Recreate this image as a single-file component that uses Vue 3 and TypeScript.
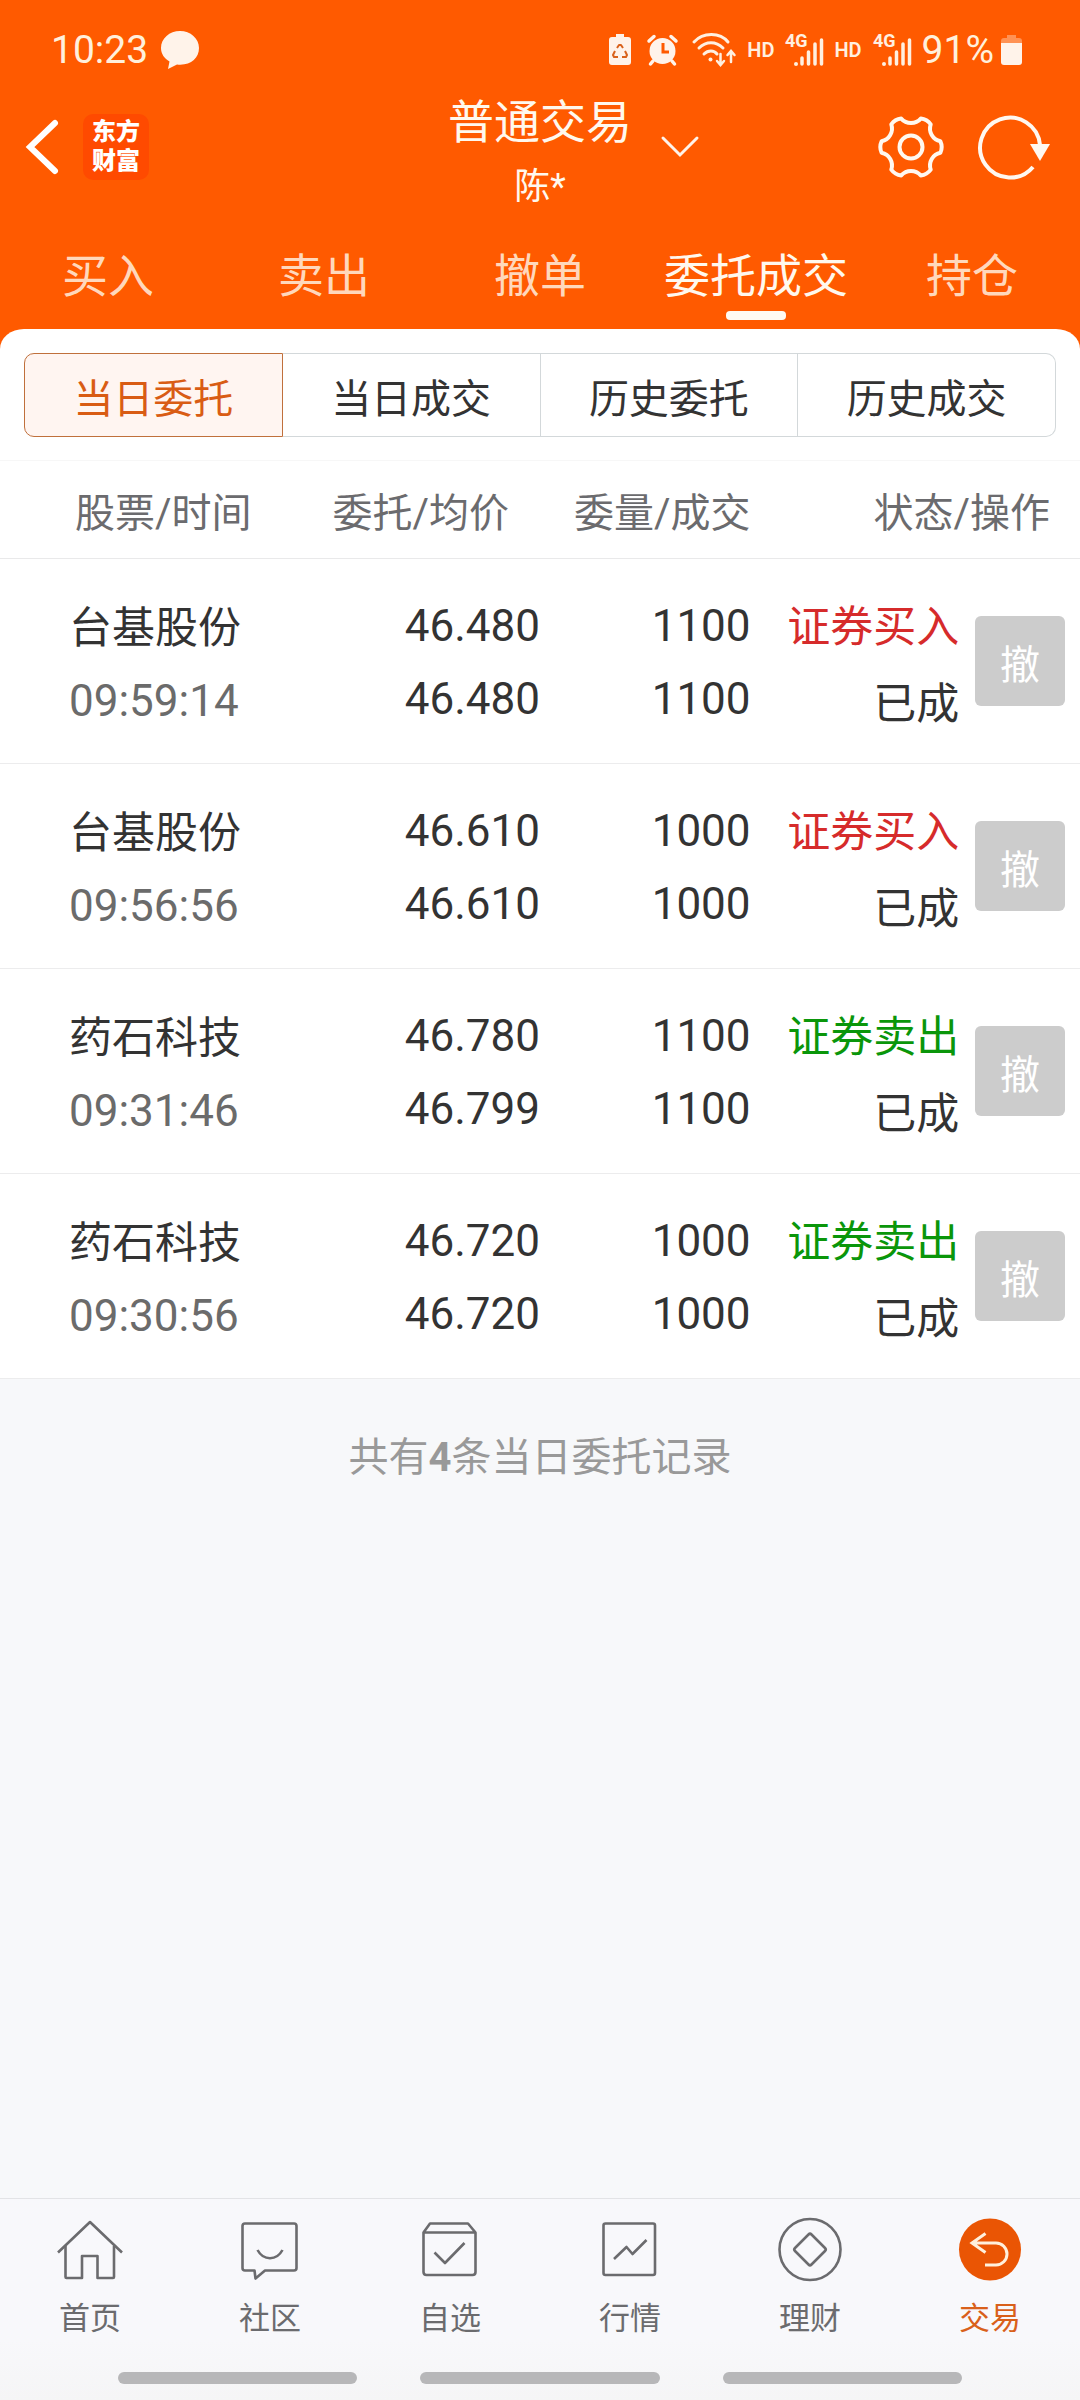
<script setup lang="ts">
interface Order {
  name: string
  time: string
  price: string
  average: string
  volume: string
  filled: string
  side: 'buy' | 'sell'
}

const tabs: string[] = ['买入', '卖出', '撤单', '委托成交', '持仓']
const activeTab = 3

const segments: string[] = ['当日委托', '当日成交', '历史委托', '历史成交']
const activeSegment = 0

const orders: Order[] = [
  { name: '台基股份', time: '09:59:14', price: '46.480', average: '46.480', volume: '1100', filled: '1100', side: 'buy' },
  { name: '台基股份', time: '09:56:56', price: '46.610', average: '46.610', volume: '1000', filled: '1000', side: 'buy' },
  { name: '药石科技', time: '09:31:46', price: '46.780', average: '46.799', volume: '1100', filled: '1100', side: 'sell' },
  { name: '药石科技', time: '09:30:56', price: '46.720', average: '46.720', volume: '1000', filled: '1000', side: 'sell' },
]

const sideLabel = { buy: '证券买入', sell: '证券卖出' }

const navItems: { key: string; label: string }[] = [
  { key: 'home', label: '首页' },
  { key: 'community', label: '社区' },
  { key: 'watchlist', label: '自选' },
  { key: 'market', label: '行情' },
  { key: 'finance', label: '理财' },
  { key: 'trade', label: '交易' },
]
const activeNav = 'trade'

// Six rounded teeth joined by concave arcs
function buildGear(cx: number, cy: number, radius: number): string {
  const point = (degrees: number, r: number): string => {
    const t = (degrees * Math.PI) / 180
    return `${(cx + r * Math.cos(t)).toFixed(1)} ${(cy + r * Math.sin(t)).toFixed(1)}`
  }
  let d = `M${point(-11, radius)}`
  for (let a = 0; a < 360; a += 60) {
    d += `Q${point(a, radius + 2)} ${point(a + 11, radius)}`
    d += `A13 13 0 0 0 ${point(a + 49, radius)}`
  }
  return d + 'Z'
}
const gearPath = buildGear(37, 38, 30)
</script>

<template>
  <div class="app">
    <header class="top">
      <div class="status">
        <div class="status-left">
          <span class="clock">10:23</span>
          <svg width="40" height="40" viewBox="0 0 40 40" aria-hidden="true">
            <path d="M20 1C9.500 1 1 8.500 1 18c0 6 3.500 10.500 8.500 13.500L8 39l9-4.500c13 1.500 22-6 22-16.500C39 8.500 30.500 1 20 1Z" fill="#fff3ea" />
          </svg>
        </div>
        <div class="status-right">
          <svg width="26" height="36" viewBox="0 0 26 36" aria-hidden="true">
            <path d="M9 2h8v3h4a3 3 0 0 1 3 3v22a3 3 0 0 1-3 3H5a3 3 0 0 1-3-3V8a3 3 0 0 1 3-3h4Z" fill="#fff3ea" />
            <g fill="none" stroke="#d9621c" stroke-width="2" stroke-linejoin="round">
              <path d="M10 16l2-3h2l2 3M18 19l2 4-1 2h-4M11 25H7l-1-2 2-4" />
            </g>
          </svg>
          <svg width="38" height="36" viewBox="0 0 38 36" aria-hidden="true">
            <circle cx="19.500" cy="19" r="13" fill="#fff3ea" />
            <path d="M6 9l5-4.500M33 9l-5-4.500M10 29l-2.500 3M29 29l2.500 3" stroke="#fff3ea" stroke-width="3.500" stroke-linecap="round" />
            <path d="M20 11v9h6" fill="none" stroke="#ff5a00" stroke-width="3" />
          </svg>
          <svg width="46" height="36" viewBox="0 0 46 36" aria-hidden="true">
            <g fill="none" stroke="#fff0e0" stroke-width="3" stroke-linecap="round">
              <path d="M3 10C12 0 29 0 37 10" />
              <path d="M8 16c7-7 17-7 24 0" />
              <path d="M13 22c4-4 10-4 13 0" />
              <path d="M29.500 22v10M26 29l3.500 4 3.500-4M40 30V20M36.500 23l3.500-4 3.500 4" stroke-width="2.500" />
            </g>
            <circle cx="19.500" cy="27.500" r="2" fill="#fff0e0" />
          </svg>
          <span class="hd">HD</span>
          <svg width="40" height="44" viewBox="0 -4 40 44" aria-hidden="true">
            <text class="net" x="1" y="15">4G</text>
            <path d="M18 26v6M24.500 20v12M31 12v20M37.500 8v24" stroke="#fff0e0" stroke-width="3.500" stroke-linecap="round" />
            <circle cx="12" cy="32" r="2" fill="#fff0e0" />
          </svg>
          <span class="hd">HD</span>
          <svg width="40" height="44" viewBox="0 -4 40 44" aria-hidden="true">
            <text class="net" x="1" y="15">4G</text>
            <path d="M18 26v6M24.500 20v12M31 12v20M37.500 8v24" stroke="#fff0e0" stroke-width="3.500" stroke-linecap="round" />
            <circle cx="12" cy="32" r="2" fill="#fff0e0" />
          </svg>
          <span class="battery">
            <span class="clock">91%</span>
            <svg width="21" height="36" viewBox="0 0 21 36" aria-hidden="true">
              <path d="M6 3h9v3h3a3 3 0 0 1 3 3v4H0V9a3 3 0 0 1 3-3h3Z" fill="#ff9254" />
              <path d="M0 11h21v19a3 3 0 0 1-3 3H3a3 3 0 0 1-3-3Z" fill="#fff3ea" />
            </svg>
          </span>
        </div>
      </div>

      <div class="bar">
        <div class="bar-left">
          <button type="button" class="plain" aria-label="返回">
            <svg width="40" height="62" viewBox="0 0 40 62">
              <path d="M33 7 8 31l25 24" fill="none" stroke="#fff" stroke-width="6" stroke-linecap="round" />
            </svg>
          </button>
          <span class="logo">东方<br />财富</span>
        </div>
        <div class="account">
          <h1>普通交易</h1>
          <p>陈*</p>
        </div>
        <div class="bar-right">
          <button type="button" class="plain" aria-label="切换账户">
            <svg width="40" height="24" viewBox="0 0 40 24">
              <path d="M3 3 20 20 37 3" fill="none" stroke="#fff3ea" stroke-width="3" stroke-linecap="round" />
            </svg>
          </button>
          <div class="tools">
            <button type="button" class="plain" aria-label="设置">
              <svg width="74" height="76" viewBox="0 0 74 76">
                <g fill="none" stroke="#fff8f0" stroke-width="4" stroke-linejoin="round">
                  <path :d="gearPath" />
                  <circle cx="37" cy="38" r="11.500" />
                </g>
              </svg>
            </button>
            <button type="button" class="plain" aria-label="刷新">
              <svg width="76" height="76" viewBox="0 0 76 76">
                <path d="M57 58A30 30 0 1 1 64 36" fill="none" stroke="#fff8f0" stroke-width="4" />
                <path d="M54 35h20L64 52Z" fill="#fff8f0" />
              </svg>
            </button>
          </div>
        </div>
      </div>

      <nav class="tabs">
        <button
          v-for="(tab, i) in tabs"
          :key="tab"
          type="button"
          class="plain tab"
          :class="{ active: i === activeTab }"
        >
          {{ tab }}
        </button>
      </nav>
    </header>

    <main class="content">
      <section class="panel">
        <div class="segments">
          <button
            v-for="(segment, i) in segments"
            :key="segment"
            type="button"
            class="segment"
            :class="{ active: i === activeSegment }"
          >
            {{ segment }}
          </button>
        </div>
        <table class="orders">
          <colgroup>
            <col class="c-name" />
            <col class="c-price" />
            <col class="c-volume" />
            <col class="c-state" />
            <col class="c-action" />
          </colgroup>
          <thead>
            <tr>
              <th scope="col" class="name">股票/时间</th>
              <th scope="col" class="price">委托/均价</th>
              <th scope="col">委量/成交</th>
              <th scope="col" colspan="2" class="state">状态/操作</th>
            </tr>
          </thead>
          <tbody>
            <tr v-for="order in orders" :key="order.time">
              <td class="name">
                <div class="cjk">{{ order.name }}</div>
                <div class="time">{{ order.time }}</div>
              </td>
              <td class="number">
                <div>{{ order.price }}</div>
                <div>{{ order.average }}</div>
              </td>
              <td class="number">
                <div>{{ order.volume }}</div>
                <div>{{ order.filled }}</div>
              </td>
              <td class="state">
                <div class="cjk" :class="order.side">{{ sideLabel[order.side] }}</div>
                <div class="cjk">已成</div>
              </td>
              <td class="action">
                <button type="button" class="cancel" disabled>撤</button>
              </td>
            </tr>
          </tbody>
        </table>
      </section>
      <p class="summary">共有<b>{{ orders.length }}</b>条当日委托记录</p>
    </main>

    <footer class="bottom">
      <nav class="nav">
        <a
          v-for="item in navItems"
          :key="item.key"
          href="#"
          class="nav-item"
          :class="{ active: item.key === activeNav }"
        >
          <svg width="72" height="72" viewBox="0 0 72 72" fill="none" stroke="#6b6b6e" stroke-width="2.600" stroke-linejoin="round" aria-hidden="true">
            <template v-if="item.key === 'home'">
              <path d="M4 38.500 36 8l32 30.500" />
              <path d="M11.500 32v31q0 1 1 1H28V42h15.500v22H59q1 0 1-1V32" />
            </template>
            <template v-else-if="item.key === 'community'">
              <path d="M11 9.500h49q2.500 0 2.500 2.500v42q0 2.500-2.500 2.500H31L21.500 64.500 20.500 56.500H11q-2.500 0-2.500-2.500V12q0-2.500 2.500-2.500Z" />
              <path d="M23.500 36c6 11 19 11 25 0" />
            </template>
            <template v-else-if="item.key === 'watchlist'">
              <path d="M9.500 18.500 16 9.500h38l7.500 9V58q0 3-3 3h-46q-3 0-3-3ZM9.500 18.500h52" />
              <path d="M20.500 38.500 31 49l19.500-20" />
            </template>
            <template v-else-if="item.key === 'market'">
              <rect x="9.500" y="9.500" width="51.500" height="51.500" rx="2" />
              <path d="M20 45l12.500-12 6 7L52.500 26" />
            </template>
            <template v-else-if="item.key === 'finance'">
              <circle cx="36" cy="35.500" r="30.500" />
              <path d="M34.500 20.500q1.500-1.500 3 0L51 34q1.500 1.500 0 3L37.500 50.500q-1.500 1.500-3 0L21 37q-1.500-1.500 0-3Z" />
            </template>
            <template v-else>
              <circle cx="36" cy="35.500" r="31" fill="#ea5504" stroke="none" />
              <path d="M31.500 19.500 18 29l13.500 9.500M18 29h24a11 11 0 0 1 0 22H31" stroke="#fff0dc" stroke-width="3" stroke-linejoin="miter" />
            </template>
          </svg>
          <span>{{ item.label }}</span>
        </a>
      </nav>
      <div class="gestures" aria-hidden="true"><i></i><i></i><i></i></div>
    </footer>
  </div>
</template>

<style>
body {
  margin: 0;
  background: #f7f8fa;
}
</style>

<style scoped>
.app {
  display: flex;
  flex-direction: column;
  min-height: 100vh;
  background: #f7f8fa;
  color: #333;
  font-family: Roboto, "Noto Sans CJK SC", sans-serif;
}

button {
  font-family: inherit;
}

svg {
  display: block;
  flex: none;
}

.plain {
  padding: 0;
  border: 0;
  background: none;
  color: inherit;
}

.top {
  padding-bottom: 20px;
  background: #ff5a00;
  color: #fff8ee;
}

.status {
  display: flex;
  justify-content: space-between;
  align-items: center;
  height: 80px;
  padding: 10px 58px 0 51px;
}

.status-left,
.status-right,
.battery {
  display: flex;
  align-items: center;
}

.status-left {
  gap: 12px;
}

.status-right {
  gap: 10px;
}

.battery {
  gap: 7px;
}

.clock {
  color: #fff0dc;
  font-size: 39px;
  line-height: 48px;
}

.hd {
  color: #fff0e0;
  font-size: 20px;
  font-weight: 600;
}

.net {
  fill: #fff0e0;
  font-size: 18px;
  font-weight: 700;
}

.bar {
  display: grid;
  grid-template-columns: 1fr auto 1fr;
}

.bar-left,
.bar-right {
  display: flex;
  align-items: center;
  padding-bottom: 12px;
}

.bar-left {
  gap: 21px;
  padding-left: 22px;
}

.bar-right {
  justify-content: space-between;
  padding-right: 28px;
  padding-left: 28px;
}

.logo {
  padding: 4px 9px;
  border-radius: 10px;
  background: #ff4a00;
  color: #fff;
  font-size: 24px;
  font-weight: 900;
  line-height: 29px;
}

.account {
  text-align: center;
}

.account h1 {
  margin: 0;
  font-size: 46px;
  font-weight: 400;
  line-height: 64px;
}

.account p {
  margin: 0;
  padding-top: 4px;
  font-size: 36px;
  line-height: 58px;
}

.tools {
  display: flex;
  gap: 28px;
}

.tabs {
  display: flex;
}

.tab {
  display: flex;
  flex: 1;
  flex-direction: column;
  align-items: center;
  gap: 5px;
  padding: 30px 0 9px;
  color: #ffd8bc;
  font-size: 46px;
  line-height: 60px;
}

.tab::after {
  width: 60px;
  height: 9px;
  border-radius: 4px;
  content: "";
}

.tab.active {
  color: #fff8ee;
}

.tab.active::after {
  background: #fffaf2;
}

.content {
  flex: 1;
}

.panel {
  position: relative;
  margin-top: -20px;
  border-radius: 24px 24px 0 0 / 20px 20px 0 0;
  background: #fff;
}

.segments {
  display: flex;
  padding: 24px 24px 23px;
  border-bottom: 1px solid #f7f7f7;
}

.segment {
  box-sizing: border-box;
  flex: 1;
  height: 84px;
  padding: 2px 0 0;
  border: 1px solid #d3d8da;
  border-left-width: 0;
  background: #fff;
  color: #333;
  font-size: 40px;
}

.segment:first-child {
  border-left-width: 1px;
  border-radius: 10px 0 0 10px;
}

.segment:last-child {
  border-radius: 0 10px 10px 0;
}

.segment.active {
  border-color: #c0703c;
  background: #fff5f1;
  color: #d95c14;
}

.orders {
  width: 100%;
  border-collapse: collapse;
  table-layout: fixed;
}

.c-name {
  width: 26%;
}

.c-price {
  width: 24%;
}

.c-volume,
.c-state {
  width: 19.5%;
}

.c-action {
  width: 11%;
}

thead tr {
  height: 97px;
}

tbody tr {
  height: 205px;
}

th {
  padding: 2px 0 0;
  border-bottom: 1px solid #e9e9ea;
  color: #6b6b6e;
  font-size: 40px;
  font-weight: 400;
  text-align: right;
  white-space: nowrap;
}

th.name {
  padding-left: 75px;
  text-align: left;
}

th.price {
  padding-right: 31px;
}

th.state {
  padding-right: 30px;
}

td {
  padding: 0;
  border-bottom: 1px solid #ececed;
  font-size: 44px;
  line-height: 73px;
  text-align: right;
  white-space: nowrap;
}

td.name {
  padding-top: 8px;
  padding-left: 69px;
  text-align: left;
}

td.number {
  padding-top: 4px;
}

td.state {
  padding-top: 10px;
  padding-right: 2px;
  line-height: 77px;
}

td.action {
  padding-right: 15px;
}

.cjk {
  font-size: 43px;
}

.time {
  color: #6b6b6b;
}

.buy {
  color: #d62b2b;
}

.sell {
  color: #0a960a;
}

.cancel {
  display: block;
  width: 90px;
  height: 90px;
  margin-left: auto;
  padding: 2px 0 0;
  border: 0;
  border-radius: 6px;
  background: #ccc;
  color: #fff;
  font-size: 40px;
}

.summary {
  margin: 0;
  padding-top: 49px;
  color: #999;
  font-size: 40px;
  line-height: 60px;
  text-align: center;
}

.bottom {
  border-top: 1px solid #e2e3e6;
  background: linear-gradient(#f8f8fb 70%, #f5f5f6);
}

.nav {
  display: flex;
  padding-top: 15px;
}

.nav-item {
  display: flex;
  flex: 1;
  flex-direction: column;
  align-items: center;
  gap: 13px;
  color: #6b6b6e;
  font-size: 31px;
  line-height: 40px;
  text-decoration: none;
}

.nav-item.active {
  color: #d9601a;
}

.gestures {
  display: flex;
  gap: 63px;
  padding: 33px 118px 16px;
}

.gestures i {
  flex: 1;
  height: 12px;
  border-radius: 6px;
  background: #b7b7b9;
}
</style>
